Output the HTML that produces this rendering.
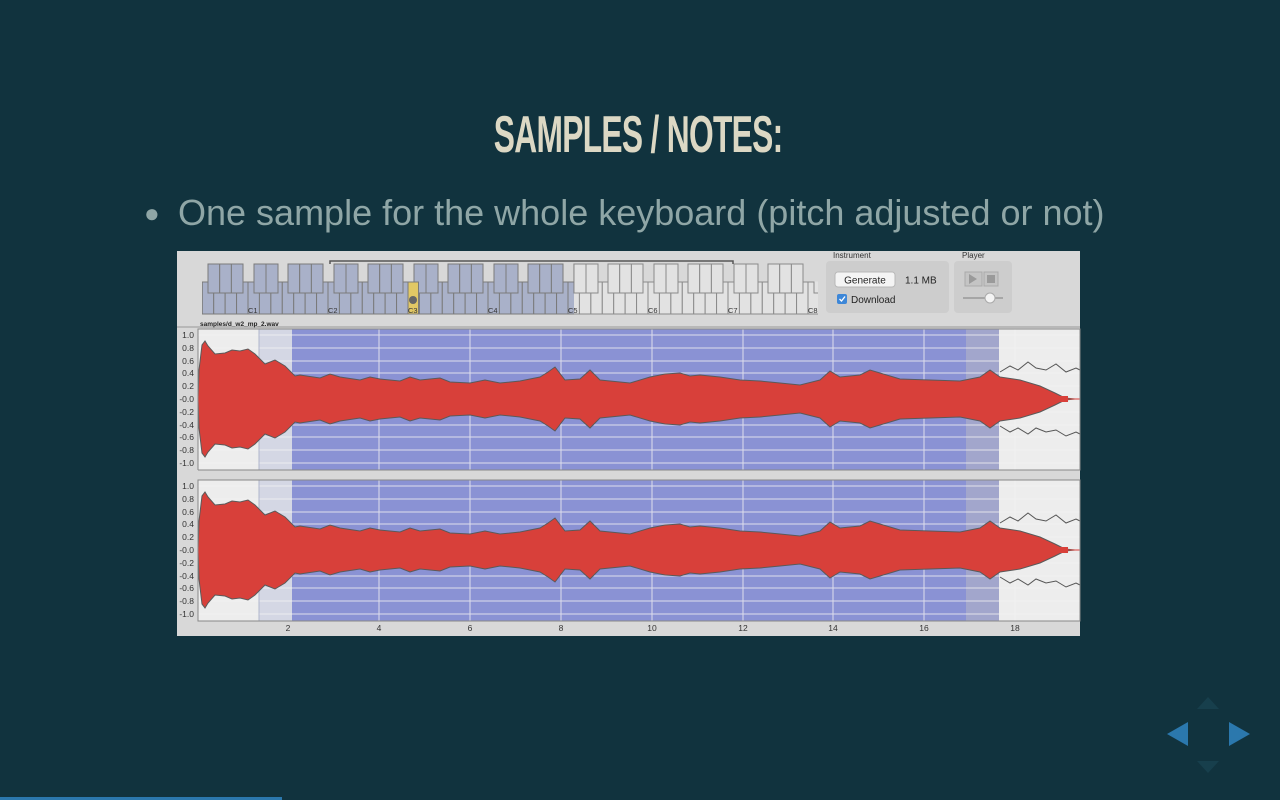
<!DOCTYPE html>
<html><head><meta charset="utf-8"><style>
html,body{margin:0;padding:0;width:1280px;height:800px;overflow:hidden;background:#11333e}
.title{position:absolute;left:0;width:1280px;top:104px;text-align:center;font-family:"Liberation Sans Narrow","Liberation Sans",sans-serif;font-weight:bold;font-size:46px;color:#dcd8c4;letter-spacing:-1px;transform:scale(0.69,1.12);transform-origin:634px 0}
.bul{position:absolute;left:144px;top:192px;font-family:"Liberation Sans",sans-serif;font-size:36px;color:#8fa6a6;white-space:nowrap;letter-spacing:0px}
.bul span{display:inline-block;width:34px;font-size:26px;vertical-align:3px}
svg{position:absolute;left:0;top:0}
</style></head><body>
<div class="title">SAMPLES / NOTES:</div>
<div class="bul"><span>●</span>One sample for the whole keyboard (pitch adjusted or not)</div>
<svg width="1280" height="800" viewBox="0 0 1280 800" font-family="Liberation Sans, sans-serif">
<defs>
<pattern id="pb" patternUnits="userSpaceOnUse" x="168" y="0" width="80" height="400">
<g stroke="#7a7a7a" stroke-width="1" fill="#a9b1c9">
<rect x="0" y="282" width="11.43" height="32"/><rect x="11.43" y="282" width="11.43" height="32"/><rect x="22.86" y="282" width="11.43" height="32"/><rect x="34.29" y="282" width="11.43" height="32"/><rect x="45.71" y="282" width="11.43" height="32"/><rect x="57.14" y="282" width="11.43" height="32"/><rect x="68.57" y="282" width="11.43" height="32"/>
<rect x="6" y="264" width="12" height="29"/><rect x="18" y="264" width="12" height="29"/>
<rect x="40" y="264" width="11.7" height="29"/><rect x="51.7" y="264" width="11.7" height="29"/><rect x="63.4" y="264" width="11.6" height="29"/>
</g></pattern>
<pattern id="pg" patternUnits="userSpaceOnUse" x="168" y="0" width="80" height="400">
<g stroke="#8a8a8a" stroke-width="1" fill="#e2e2e2">
<rect x="0" y="282" width="11.43" height="32"/><rect x="11.43" y="282" width="11.43" height="32"/><rect x="22.86" y="282" width="11.43" height="32"/><rect x="34.29" y="282" width="11.43" height="32"/><rect x="45.71" y="282" width="11.43" height="32"/><rect x="57.14" y="282" width="11.43" height="32"/><rect x="68.57" y="282" width="11.43" height="32"/>
<rect x="6" y="264" width="12" height="29"/><rect x="18" y="264" width="12" height="29"/>
<rect x="40" y="264" width="11.7" height="29"/><rect x="51.7" y="264" width="11.7" height="29"/><rect x="63.4" y="264" width="11.6" height="29"/>
</g></pattern>
<polygon id="env" points="198,399 199,370 202,345 205,341 208,346 215,354 225,353 232,350 240,351 248,349 255,354 265,364 275,360 285,366 295,376 300,375 320,378 330,374 340,377 360,380 370,377 380,379 400,381 410,377 420,380 440,378 450,382 470,383 485,380 500,383 520,381 540,377 548,372 555,367 565,380 580,379 590,370 600,380 630,383 650,377 665,374 680,373 690,376 700,375 720,377 740,380 760,381 780,383 800,385 820,380 830,371 840,377 860,375 870,370 880,373 900,379 930,380 960,381 980,377 990,370 1000,377 1020,380 1040,386 1055,393 1065,398 1075,399"/>
</defs>
<rect x="177" y="251" width="903" height="385" fill="#d8d8d8"/>
<rect x="202" y="262" width="372" height="53" fill="url(#pb)"/>
<rect x="574" y="262" width="244" height="53" fill="url(#pg)"/>
<rect x="807" y="262" width="15" height="19.5" fill="#d8d8d8"/>
<rect x="201" y="262" width="6" height="19.5" fill="#d8d8d8"/>
<rect x="408" y="282" width="10.5" height="32" fill="#e2c865" stroke="#7a7a7a"/>
<circle cx="413" cy="300" r="4" fill="#666"/>
<path d="M330 264V261H733V264" stroke="#555" stroke-width="1.5" fill="none"/>
<g font-size="7.5" fill="#333">
<text x="248" y="313">C1</text><text x="328" y="313">C2</text><text x="408" y="313">C3</text><text x="488" y="313">C4</text><text x="568" y="313">C5</text><text x="648" y="313">C6</text><text x="728" y="313">C7</text><text x="808" y="313">C8</text>
</g>
<text x="833" y="258" font-size="8" fill="#333">Instrument</text>
<rect x="826" y="261" width="123" height="52" rx="4" fill="#cdcdcd"/>
<rect x="835" y="272" width="60" height="15" rx="3" fill="#f4f4f4" stroke="#b8b8b8"/>
<text x="865" y="283.5" font-size="10" fill="#222" text-anchor="middle">Generate</text>
<text x="905" y="283.5" font-size="10" fill="#222">1.1 MB</text>
<rect x="837" y="294" width="10" height="10" rx="2" fill="#3d87d8"/>
<path d="M839.5 299l2 2 3.5-4.5" stroke="#fff" stroke-width="1.3" fill="none"/>
<text x="851" y="303" font-size="10" fill="#222">Download</text>
<text x="962" y="258" font-size="8" fill="#333">Player</text>
<rect x="954" y="261" width="58" height="52" rx="4" fill="#cdcdcd"/>
<rect x="965" y="272" width="17" height="14" fill="#c4c4c4" stroke="#aaa"/>
<path d="M969 274l8 5-8 5z" fill="#9a9a9a"/>
<rect x="984" y="272" width="14" height="14" fill="#c4c4c4" stroke="#aaa"/>
<rect x="987" y="275" width="8" height="8" fill="#9a9a9a"/>
<line x1="963" y1="298" x2="1003" y2="298" stroke="#999" stroke-width="1.5"/>
<circle cx="990" cy="298" r="5" fill="#f4f4f4" stroke="#aaa"/>
<line x1="177" y1="327" x2="1080" y2="327" stroke="#999"/>
<text x="200" y="326" font-size="6.5" font-weight="bold" fill="#222">samples/d_w2_mp_2.wav</text>
<g id="p1">
<rect x="198" y="329" width="882" height="141" fill="#ededed"/>
<rect x="259" y="329" width="33" height="141" fill="#d4d7e4"/>
<rect x="292" y="329" width="674" height="141" fill="#8a92d4"/>
<rect x="966" y="329" width="33" height="141" fill="#a2a6cc"/>
<g stroke="#f2f2f2" stroke-width="1" opacity="0.8">
<line x1="198" x2="1080" y1="335" y2="335"/><line x1="198" x2="1080" y1="348" y2="348"/><line x1="198" x2="1080" y1="361" y2="361"/><line x1="198" x2="1080" y1="373" y2="373"/><line x1="198" x2="1080" y1="386" y2="386"/><line x1="198" x2="1080" y1="412" y2="412"/><line x1="198" x2="1080" y1="425" y2="425"/><line x1="198" x2="1080" y1="437" y2="437"/><line x1="198" x2="1080" y1="450" y2="450"/><line x1="198" x2="1080" y1="463" y2="463"/>
<line x1="379" x2="379" y1="329" y2="470"/><line x1="470" x2="470" y1="329" y2="470"/><line x1="561" x2="561" y1="329" y2="470"/><line x1="652" x2="652" y1="329" y2="470"/><line x1="743" x2="743" y1="329" y2="470"/><line x1="833" x2="833" y1="329" y2="470"/><line x1="924" x2="924" y1="329" y2="470"/><line x1="1015" x2="1015" y1="329" y2="470"/>
</g>
<line x1="259" x2="259" y1="329" y2="470" stroke="#b0b6cc"/>
<path d="M1000 372l10-6 8 4 10-8 8 6 10 2 10-6 10 8 10-4 4 2" stroke="#555" fill="none"/>
<path d="M1000 426l10 6 8-4 10 6 8-6 10 4 10-2 10 6 10-4 4 2" stroke="#555" fill="none"/>
<use href="#env" fill="#d8403a" stroke="#5a5a5a" stroke-width="1"/>
<use href="#env" fill="#d8403a" stroke="#5a5a5a" stroke-width="1" transform="matrix(1,0,0,-1,0,798)"/>
<rect x="198" y="396" width="870" height="6" fill="#d8403a"/>
<line x1="1065" x2="1080" y1="399" y2="399" stroke="#d8403a"/>
<rect x="198" y="329" width="882" height="141" fill="none" stroke="#888"/>
</g>
<use href="#p1" transform="translate(0,151)"/>
<rect x="178" y="470" width="902" height="9" fill="#d8d8d8"/>
<line x1="198" x2="1080" y1="470" y2="470" stroke="#888"/>
<line x1="198" x2="1080" y1="480" y2="480" stroke="#888"/>
<g font-size="8.5" fill="#333" text-anchor="end">
<text x="194" y="338">1.0</text><text x="194" y="351">0.8</text><text x="194" y="364">0.6</text><text x="194" y="376">0.4</text><text x="194" y="389">0.2</text><text x="194" y="402">-0.0</text><text x="194" y="415">-0.2</text><text x="194" y="428">-0.4</text><text x="194" y="440">-0.6</text><text x="194" y="453">-0.8</text><text x="194" y="466">-1.0</text>
<text x="194" y="489">1.0</text><text x="194" y="502">0.8</text><text x="194" y="515">0.6</text><text x="194" y="527">0.4</text><text x="194" y="540">0.2</text><text x="194" y="553">-0.0</text><text x="194" y="566">-0.2</text><text x="194" y="579">-0.4</text><text x="194" y="591">-0.6</text><text x="194" y="604">-0.8</text><text x="194" y="617">-1.0</text>
</g>
<g font-size="8.5" fill="#333" text-anchor="middle">
<text x="288" y="631">2</text><text x="379" y="631">4</text><text x="470" y="631">6</text><text x="561" y="631">8</text><text x="652" y="631">10</text><text x="743" y="631">12</text><text x="833" y="631">14</text><text x="924" y="631">16</text><text x="1015" y="631">18</text>
</g>
<path d="M1167 734l21-12v24z" fill="#2b78ad"/>
<path d="M1250 734l-21-12v24z" fill="#2b78ad"/>
<path d="M1208 697l-11 12h22z" fill="#173f4c"/>
<path d="M1208 773l-11-12h22z" fill="#173f4c"/>
<rect x="0" y="797" width="282" height="3" fill="#2b78ad"/>
</svg>
</body></html>
